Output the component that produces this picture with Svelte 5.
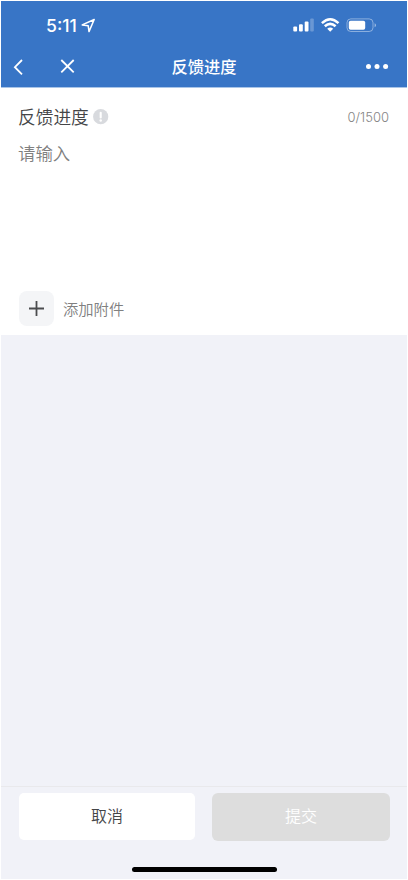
<script>
  let feedback = $state('');
  const limit = 1500;
</script>

<div class="screen">
  <header>
    <div class="status">
      <span class="time">5:11</span>
      <svg class="location" width="15" height="15" viewBox="0 0 15 15" fill="none" stroke="#fff" stroke-width="1.5" stroke-linejoin="round">
        <path d="M13.2 1.5 1.2 6.9 7.2 7.7 8 13.6Z" />
      </svg>
      <svg class="signals" width="86" height="16" viewBox="0 0 86 16">
        <g fill="#fff">
          <rect x="1.3" y="9.6" width="3.8" height="5" rx="1" />
          <rect x="7" y="7.2" width="3.8" height="7.4" rx="1" />
          <rect x="12.7" y="4.4" width="3.8" height="10.2" rx="1" />
          <rect x="18.2" y="1.6" width="3.6" height="13" rx="1" opacity=".25" />
        </g>
        <g fill="none" stroke="#fff" stroke-width="2.5">
          <path d="M29.9 6.2Q38.2-1.6 46.5 6.2" />
          <path d="M32.8 9.3Q38.2 4.4 43.6 9.3" />
        </g>
        <path d="M35.2 11.8Q38.2 9 41.2 11.8L38.2 14.8Z" fill="#fff" />
        <rect x="55" y="1.9" width="26" height="12.6" rx="3.8" fill="none" stroke="#fff" stroke-opacity=".42" />
        <rect x="56.8" y="3.7" width="16.4" height="9" rx="1.8" fill="#fff" />
        <path d="M82.6 6.2v4q1.4-.6 1.4-2t-1.4-2Z" fill="#fff" opacity=".5" />
      </svg>
    </div>
    <nav>
      <div class="left">
        <svg width="12" height="18" viewBox="0 0 12 18" fill="none" stroke="#fff" stroke-width="1.8">
          <path d="M10 2 2.9 9.2 10 16.4" />
        </svg>
        <svg class="close" width="16" height="16" viewBox="0 0 16 16" fill="none" stroke="#fff" stroke-width="1.8">
          <path d="m1.3 2 12.4 12.4M13.7 2 1.3 14.4" />
        </svg>
      </div>
      <h1>反馈进度</h1>
      <svg class="more" width="24" height="8" viewBox="0 0 24 8" fill="#fff">
        <circle cx="2.5" cy="4.4" r="2.5" /><circle cx="11" cy="4.4" r="2.5" /><circle cx="19.6" cy="4.4" r="2.5" />
      </svg>
    </nav>
  </header>

  <main>
    <div class="label">
      <span class="name">反馈进度</span>
      <svg width="16" height="16" viewBox="0 0 16 16">
        <circle cx="7.7" cy="7.7" r="7.6" fill="#d8dade" />
        <path d="M7.7 3.7v4.7" stroke="#fff" stroke-width="2.1" stroke-linecap="round" />
        <circle cx="7.7" cy="11.6" r="1.25" fill="#fff" />
      </svg>
      <span class="count">{feedback.length}/{limit}</span>
    </div>
    <textarea placeholder="请输入" bind:value={feedback}></textarea>
    <div class="attach">
      <button class="add" aria-label="添加附件">
        <svg width="16" height="16" viewBox="0 0 16 16" stroke="#4b4c4e" stroke-width="1.8"><path d="M0 7.5h15M7.5 0v15" /></svg>
      </button>
      <span>添加附件</span>
    </div>
  </main>

  <footer>
    <div class="actions">
      <button class="cancel">取消</button>
      <button class="submit">提交</button>
    </div>
    <div class="home"></div>
  </footer>
</div>

<style>
  :global(body) { background: #fff; }
  .screen {
    width: 408px;
    height: 880px;
    box-sizing: border-box;
    border: 1px solid #fff;
    background: #f1f2f8;
    display: flex;
    flex-direction: column;
    font-family: Inter, "Noto Sans CJK SC", sans-serif;
  }
  button, textarea { font-family: inherit; border: 0; margin: 0; }
  button { padding: 0; }
  svg { display: block; flex: none; }
  header { height: 87px; box-sizing: border-box; border-bottom: 1px solid #a9c5e8; background: #3875c6; background-clip: padding-box; color: #fff; }
  .status { height: 46px; display: flex; align-items: flex-start; padding: 16px 29px 0 45px; box-sizing: border-box; }
  .time { font-size: 17.6px; line-height: 18px; font-weight: 500; width: 35px; }
  .location { margin-top: 1px; }
  .signals { margin-left: auto; }
  nav { height: 40px; display: grid; grid-template-columns: 1fr auto 1fr; align-items: start; padding: 0 17px 0 11px; }
  .left { display: flex; padding-top: 11px; }
  .close { margin: 0 0 0 36px; }
  h1 { margin: 8px 0 0 6px; font-size: 16.3px; line-height: 24px; font-weight: 500; }
  .more { justify-self: end; margin-top: 15px; }
  main { height: 247px; box-sizing: border-box; background: #fff; padding: 17px 17px 0; display: flex; flex-direction: column; }
  .label { display: flex; align-items: center; height: 24px; font-size: 17.7px; line-height: 24px; color: #444547; font-weight: 350; }
  .label svg { margin-left: 4px; }
  .name { padding-top: 1px; }
  .count { margin-left: auto; margin-right: 1px; font-size: 13px; color: #858585; }
  textarea { display: block; resize: none; outline: 0; background: transparent; height: 150px; padding: 12px 0 0; box-sizing: border-box; font-size: 17.4px; line-height: 26px; font-weight: 350; color: #4b4c4e; }
  textarea::placeholder { color: #808080; opacity: 1; }
  .attach { display: flex; align-items: center; margin: 12px 0 0 1px; gap: 9px; font-size: 15.3px; line-height: 22px; font-weight: 350; color: #808080; }
  .attach span { padding-top: 2px; }
  .add { width: 35px; height: 35px; border-radius: 8px; background: #f4f5f7; display: grid; place-items: center; }
  footer { margin-top: auto; height: 93px; box-sizing: border-box; border-top: 1px solid #e9e9ec; padding: 6px 17px 0; }
  .actions { display: flex; justify-content: space-between; }
  .actions button { font-size: 16px; line-height: 24px; font-weight: 350; }
  .cancel { width: 176px; height: 47px; margin: 0.4px 0 0 1px; padding-bottom: 2px; border-radius: 5px; background: #fff; color: #444547; }
  .submit { width: 178px; height: 48px; padding-bottom: 2px; border-radius: 6px; background: #ddd; color: #fff; }
  .home { width: 145px; height: 5px; border-radius: 3px; background: #000; margin: 25.6px auto 0; }
</style>
